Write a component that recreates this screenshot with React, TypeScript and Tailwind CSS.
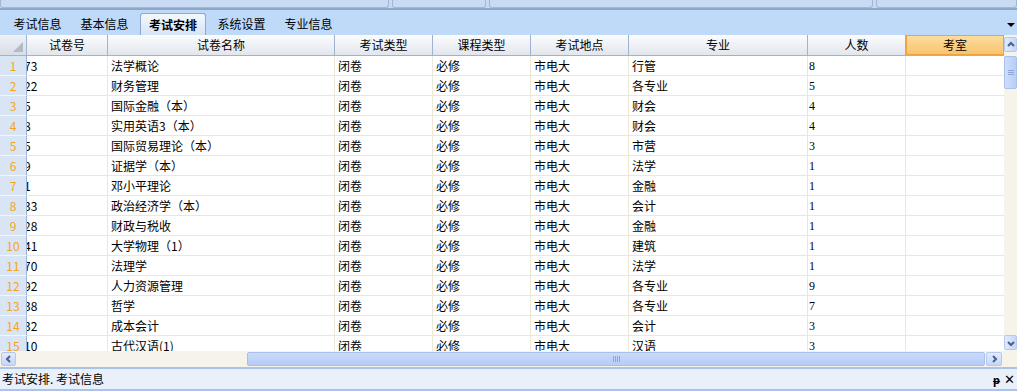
const cols = [
  { title: "试卷号", w: "w-[81px]" },
  { title: "试卷名称", w: "w-[227px]" },
  { title: "考试类型", w: "w-[98px]" },
  { title: "课程类型", w: "w-[98px]" },
  { title: "考试地点", w: "w-[98px]" },
  { title: "专业", w: "w-[179px]" },
  { title: "人数", w: "w-[98px]" },
];

const rows = [
  ["73", "法学概论", "行管", "8"],
  ["22", "财务管理", "各专业", "5"],
  ["5", "国际金融（本）", "财会", "4"],
  ["8", "实用英语3（本）", "财会", "4"],
  ["5", "国际贸易理论（本）", "市营", "3"],
  ["9", "证据学（本）", "法学", "1"],
  ["1", "邓小平理论", "金融", "1"],
  ["33", "政治经济学（本）", "会计", "1"],
  ["28", "财政与税收", "金融", "1"],
  ["41", "大学物理（1）", "建筑", "1"],
  ["70", "法理学", "法学", "1"],
  ["92", "人力资源管理", "各专业", "9"],
  ["38", "哲学", "各专业", "7"],
  ["32", "成本会计", "会计", "3"],
  ["10", "古代汉语(1)", "汉语", "3"],
];

const tabs = ["考试信息", "基本信息", "考试安排", "系统设置", "专业信息"];

function Chevron({ dir }: { dir: "up" | "down" | "left" | "right" }) {
  const d = {
    up: "M2 6 L5 3 L8 6",
    down: "M2 4 L5 7 L8 4",
    left: "M6 2 L3 5 L6 8",
    right: "M4 2 L7 5 L4 8",
  }[dir];
  return (
    <svg width="10" height="10" viewBox="0 0 10 10">
      <path d={d} fill="none" stroke="#4d6185" strokeWidth="2" />
    </svg>
  );
}

export default function App() {
  return (
    <div
      className="flex h-[391px] w-[1017px] flex-col overflow-hidden bg-[#f5f3ea] text-[12px] text-black"
      style={{ fontFamily: '"Noto Sans CJK SC", "Noto Sans", sans-serif' }}
    >
      {/* cut-off toolbar buttons */}
      <div className="flex h-[8px] gap-[3px] bg-[#c6daf2]">
        <div className="w-[389px] rounded-b-[3px] border-x border-b border-[#9fb7d8] bg-[#c8dbf3]" />
        <div className="w-[94px] rounded-b-[3px] border-x border-b border-[#9fb7d8] bg-[#c8dbf3]" />
        <div className="w-[384px] rounded-b-[3px] border-x border-b border-[#9fb7d8] bg-[#c8dbf3]" />
        <div className="flex-1 rounded-b-[3px] border-x border-b border-[#9fb7d8] bg-[#c8dbf3]" />
      </div>
      <div className="h-[2px] bg-[#8fa6c6]" />

      {/* tabs */}
      <div className="flex h-[25px] items-end bg-[#bfdaf8] pl-[4px]">
        {tabs.map((t, i) => (
          <div
            key={t}
            className={
              i === 2
                ? "mx-[2px] flex h-[22px] w-[66px] items-center justify-center rounded-t-[3px] border border-b-0 border-[#8ea8cc] bg-gradient-to-b from-[#f4f8fd] to-[#d6e4f6] font-bold"
                : "flex h-[22px] w-[67px] items-center justify-center"
            }
          >
            {t}
          </div>
        ))}
        <div className="flex-1" />
        <div className="mb-[8px] mr-[2px] h-0 w-0 border-x-[4px] border-t-[4px] border-x-transparent border-t-black" />
      </div>

      {/* grid */}
      <div className="flex min-h-0 flex-1">
        <div className="flex min-w-0 flex-1 flex-col overflow-hidden bg-white">
          <div className="flex h-[21px] shrink-0 border-b border-[#9db4d0]">
            <div className="relative w-[27px] shrink-0 border-r border-[#9db4d0] bg-gradient-to-b from-[#eef1f6] to-[#d8dde6]">
              <div className="absolute bottom-[3px] right-[3px] h-0 w-0 border-b-[10px] border-l-[10px] border-b-[#b4b9c2] border-l-transparent" />
            </div>
            {cols.map((c) => (
              <div
                key={c.title}
                className={`${c.w} flex shrink-0 items-center justify-center border-r border-[#9db4d0] bg-gradient-to-b from-[#fbfcfd] to-[#e2e6ed]`}
              >
                {c.title}
              </div>
            ))}
            <div className="flex w-[98px] shrink-0 items-center justify-center border border-[#f0a23c] bg-gradient-to-b from-[#fbdc9e] to-[#f7c46e]">
              考室
            </div>
          </div>
          {rows.map((r, i) => (
            <div key={i} className="flex h-[20px] shrink-0">
              <div className="flex w-[27px] shrink-0 items-center justify-center border-b border-r border-b-[#f3f6fb] border-r-[#9db4d0] bg-[#d9e5f4] text-[#f2a51b]">
                {i + 1}
              </div>
              <div className="w-[81px] shrink-0 overflow-hidden border-b border-r border-[#ece7d7] pl-[0px]">
                <div className="-ml-[3px] leading-[19px]">{r[0]}</div>
              </div>
              <div className="w-[227px] shrink-0 border-b border-r border-[#ece7d7] pl-[3px] leading-[19px]">{r[1]}</div>
              <div className="w-[98px] shrink-0 border-b border-r border-[#ece7d7] pl-[3px] leading-[19px]">闭卷</div>
              <div className="w-[98px] shrink-0 border-b border-r border-[#ece7d7] pl-[3px] leading-[19px]">必修</div>
              <div className="w-[98px] shrink-0 border-b border-r border-[#ece7d7] pl-[3px] leading-[19px]">市电大</div>
              <div className="w-[179px] shrink-0 border-b border-r border-[#ece7d7] pl-[3px] leading-[19px]">{r[2]}</div>
              <div className="w-[98px] shrink-0 border-b border-r border-[#ece7d7] pl-[1px] pt-[1px] leading-[19px]" style={{ fontFamily: '"Liberation Serif", serif' }}>
                {r[3]}
              </div>
              <div className="w-[98px] shrink-0 border-b border-[#ece7d7]" />
            </div>
          ))}
        </div>

        {/* vertical scrollbar */}
        <div className="flex w-[13px] shrink-0 flex-col bg-[#f5f3ea] pt-[2px]">
          <div className="flex h-[15px] items-center justify-center rounded-[2px] border border-[#b6c8ee] bg-gradient-to-r from-[#e2ebfd] to-[#c4d6fb]">
            <Chevron dir="up" />
          </div>
          <div className="mt-[4px] flex h-[33px] flex-col items-center justify-center gap-[1px] rounded-[2px] border border-[#a9bfec] bg-gradient-to-r from-[#d0ddfb] to-[#b8cdf7]">
            <div className="h-px w-[6px] bg-[#8fa6d8]" />
            <div className="h-px w-[6px] bg-[#8fa6d8]" />
            <div className="h-px w-[6px] bg-[#8fa6d8]" />
          </div>
          <div className="flex-1" />
          <div className="mb-[1px] flex h-[15px] items-center justify-center rounded-[2px] border border-[#b6c8ee] bg-gradient-to-r from-[#e2ebfd] to-[#c4d6fb]">
            <Chevron dir="down" />
          </div>
        </div>
      </div>

      {/* horizontal scrollbar */}
      <div className="flex h-[15px] shrink-0 items-center bg-[#f5f3ea]">
        <div className="ml-[1px] flex h-[14px] w-[15px] items-center justify-center rounded-[2px] border border-[#b6c8ee] bg-gradient-to-b from-[#e2ebfd] to-[#c4d6fb]">
          <Chevron dir="left" />
        </div>
        <div className="w-[231px]" />
        <div className="flex h-[14px] w-[738px] items-center justify-center gap-[1px] rounded-[2px] border border-[#a9bfec] bg-gradient-to-b from-[#cbdafb] to-[#b6cbf6]">
          <div className="h-[6px] w-px bg-[#8fa6d8]" />
          <div className="h-[6px] w-px bg-[#8fa6d8]" />
          <div className="h-[6px] w-px bg-[#8fa6d8]" />
          <div className="h-[6px] w-px bg-[#8fa6d8]" />
        </div>
        <div className="ml-[1px] flex h-[14px] w-[16px] items-center justify-center rounded-[2px] border border-[#b6c8ee] bg-gradient-to-b from-[#e2ebfd] to-[#c4d6fb]">
          <Chevron dir="right" />
        </div>
      </div>

      {/* status bar */}
      <div className="mt-[1px] flex h-[24px] shrink-0 items-center border-y-2 border-[#a8c4e8] bg-[#e9f0f9] pl-[2px]">
        <span className="flex-1">考试安排. 考试信息</span>
        <span className="mr-[4px] text-[11px] font-bold">ᵽ</span>
        <span className="mr-[2px] text-[13px]">✕</span>
      </div>
    </div>
  );
}
